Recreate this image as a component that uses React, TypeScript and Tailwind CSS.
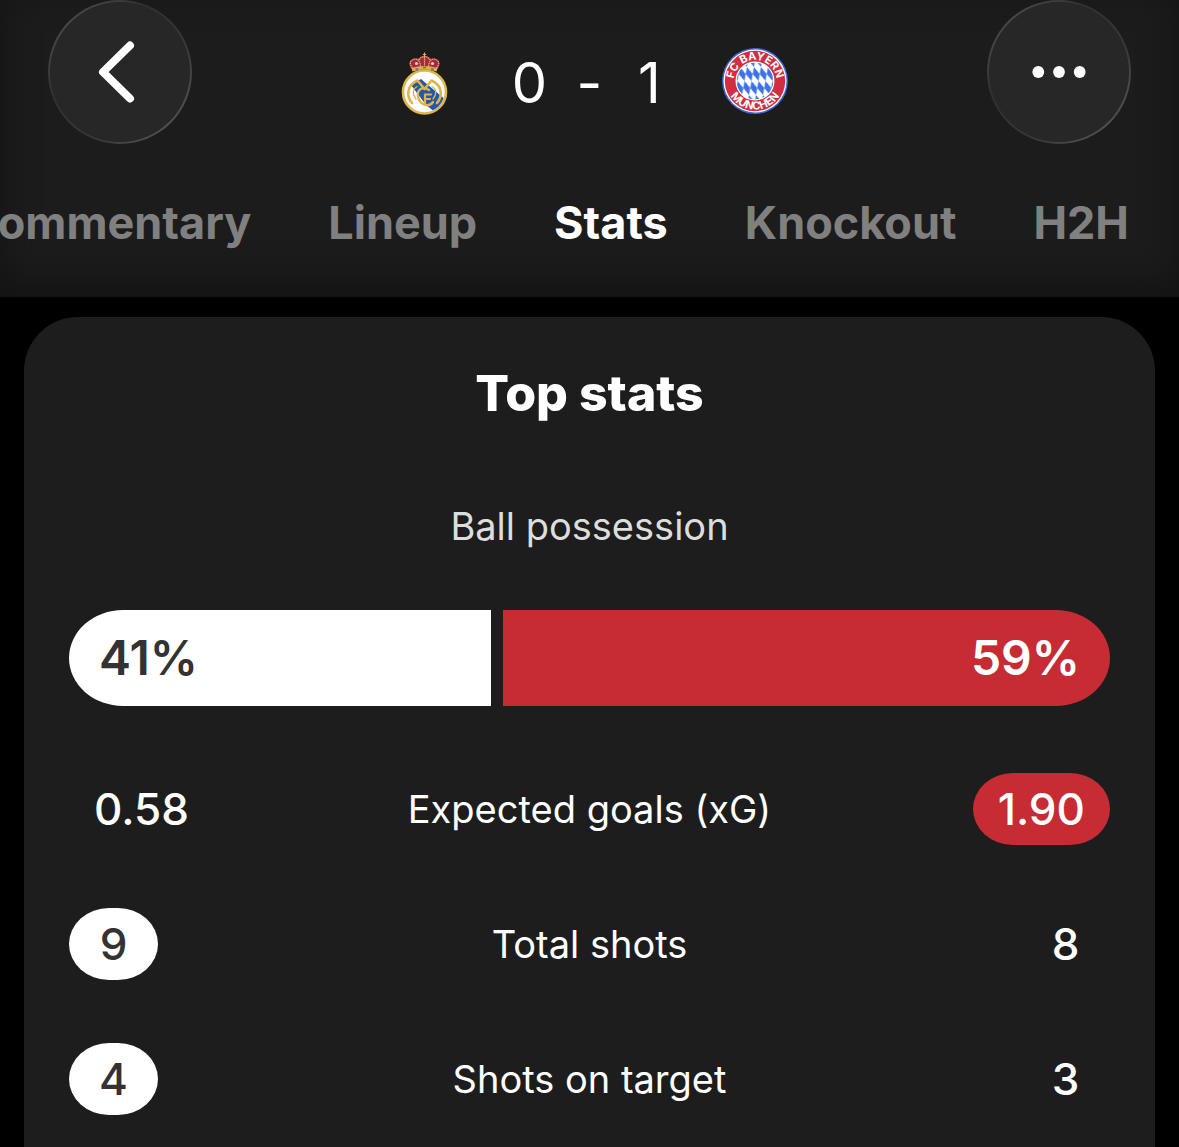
import React, { useState } from "react";
import { clsx } from "clsx";

type Side = "home" | "away";

type Stat = {
  label: string;
  home: string;
  away: string;
  leader: Side;
};

const tabs = ["Commentary", "Lineup", "Stats", "Knockout", "H2H"];

const possession = { home: 41, away: 59 };

const stats: Stat[] = [
  { label: "Expected goals (xG)", home: "0.58", away: "1.90", leader: "away" },
  { label: "Total shots", home: "9", away: "8", leader: "home" },
  { label: "Shots on target", home: "4", away: "3", leader: "home" },
];

function RealMadridCrest() {
  return (
    <svg viewBox="0 0 66 66" className="size-[66px] overflow-visible" aria-hidden="true">
      <defs>
        <clipPath id="rm-disc">
          <circle cx="32.500" cy="44" r="20" />
        </clipPath>
      </defs>
      {/* crown */}
      <path d="M20 22C14 15 19 9 26 10.500Q32.500 5 39 10.500C46 9 51 15 45 22Q32.500 18 20 22Z" fill="#a8273c" />
      <path
        d="M20.500 20Q15 13 23 11Q28 11 28.500 19M44.500 20Q50 13 42 11Q37 11 36.500 19M32.500 9V18M27 12Q29 8.500 32.500 8.500T38 12"
        fill="none"
        stroke="#d9b679"
        strokeWidth="1.200"
        strokeDasharray="1.500 .6"
      />
      <path d="M32.500 4.500V9M30.800 6.500H34.200" stroke="#e3b34c" strokeWidth="1.200" />
      <circle cx="24.500" cy="15.500" r="1.600" fill="#eec5bd" />
      <circle cx="40.500" cy="15.500" r="1.600" fill="#eec5bd" />
      <path d="M19.500 20Q32.500 16 45.500 20L44.500 23.500Q32.500 19.500 20.500 23.500Z" fill="#dcb04a" />
      <path d="M23.500 21H26.500M31 19.500H34M39 21H42" stroke="#4b6fb5" strokeWidth="1.300" />
      {/* disc with the diagonal band */}
      <circle cx="32.500" cy="44" r="21.500" fill="#fff" stroke="#e0b54b" strokeWidth="2.600" />
      <g clipPath="url(#rm-disc)">
        <path d="M19 37L29 31L54 52L44 65L34 57Z" fill="#2359a8" />
      </g>
      <g fill="none" stroke="#dfb549" strokeLinecap="round" strokeLinejoin="round">
        <path d="M20 55C13.500 47 15.500 37 25.500 32.500L32.500 41L39.500 32.500C49.500 37 51.500 47 45 55" strokeWidth="2.600" />
        <path d="M24 51C20 46 20.500 41 25 38.500M41 51C45 46 44.500 41 40 38.500" strokeWidth="1.300" />
        <path d="M37 42C30.500 37.500 25 42 26 48C27 57 37 60 41 54" strokeWidth="2.300" />
        <path d="M33 56.500V46.500H39M33 51H38" strokeWidth="2.200" />
      </g>
    </svg>
  );
}

function BayernCrest() {
  return (
    <svg viewBox="0 0 66 66" className="size-[66px]" aria-hidden="true">
      <defs>
        <pattern id="bay-check" width="7" height="14" patternUnits="userSpaceOnUse" patternTransform="translate(33 33) skewX(18)">
          <rect width="7" height="14" fill="#fff" />
          <path d="M3.500 0L7 7L3.500 14L0 7Z" fill="#3c72e8" />
        </pattern>
        <path id="bay-top" d="M12 38A21.500 21.500 0 1 1 54 38" />
        <path id="bay-bottom" d="M4.500 33A28.500 28.500 0 0 0 61.500 33" />
      </defs>
      <circle cx="33" cy="33" r="33" fill="#3c67dc" />
      <circle cx="33" cy="33" r="31.500" fill="#fff" />
      <circle cx="33" cy="33" r="30.200" fill="#d22d40" />
      <circle cx="33" cy="33" r="19.500" fill="#fff" />
      <circle cx="33" cy="33" r="18.300" fill="url(#bay-check)" />
      <g className="fill-white font-['Inter',sans-serif] text-[11px] font-bold" textAnchor="middle">
        <text>
          <textPath href="#bay-top" startOffset="50%">FC BAYERN</textPath>
        </text>
        <text>
          <textPath href="#bay-bottom" startOffset="50%">MÜNCHEN</textPath>
        </text>
      </g>
    </svg>
  );
}

function RoundButton({ label, children }: { label: string; children: React.ReactNode }) {
  return (
    <button
      type="button"
      aria-label={label}
      className="size-36 shrink-0 rounded-full bg-[linear-gradient(135deg,#585858,#303030_35%,#383838_65%,#606060)] p-[2px]"
    >
      <span className="flex size-full items-center justify-center rounded-full bg-[#272727]">{children}</span>
    </button>
  );
}

function Value({ value, side, leader }: { value: string; side: Side; leader: Side }) {
  const leading = side === leader;
  return (
    <span
      className={clsx(
        "inline-flex h-[72px] min-w-[89px] items-center justify-center rounded-[40px/36px] px-[25px] text-[44px] font-medium",
        leading && side === "home" && "bg-white text-[#333333]",
        leading && side === "away" && "bg-[#c72c34] text-white",
        !leading && "text-white"
      )}
    >
      {value}
    </span>
  );
}

export default function App() {
  const [activeTab, setActiveTab] = useState("Stats");

  return (
    <div className="flex min-h-screen flex-col bg-black font-['Inter',sans-serif] text-white">
      <header className="bg-[#1c1c1c] pb-10 shadow-[inset_0_-14px_36px_#131313]">
        <div className="flex items-start justify-between px-12">
          <RoundButton label="Back">
            <svg viewBox="0 0 72 72" className="size-[72px]" fill="none" stroke="#fff" strokeWidth="8" strokeLinecap="round" strokeLinejoin="round">
              <path d="M46 9.500L19 36L46 62.500" />
            </svg>
          </RoundButton>

          <div className="flex h-[162px] items-center gap-[54px]">
            <RealMadridCrest />
            <div className="flex gap-6 pt-1 text-center text-[56px]">
              <span className="w-9">0</span>
              <span className="w-9">-</span>
              <span className="w-9">1</span>
            </div>
            <BayernCrest />
          </div>

          <RoundButton label="More">
            <svg viewBox="0 0 72 72" className="size-[72px]" fill="#fff">
              <circle cx="15.300" cy="36" r="5.900" />
              <circle cx="36" cy="36" r="5.900" />
              <circle cx="56.700" cy="36" r="5.900" />
            </svg>
          </RoundButton>
        </div>

        <nav className="flex h-[95px] items-start justify-end gap-[77px] overflow-hidden px-[50px] pt-8 text-[45px] leading-[58px] font-bold">
          {tabs.map((tab) => (
            <button
              key={tab}
              type="button"
              onClick={() => setActiveTab(tab)}
              className={clsx("shrink-0", tab === activeTab ? "text-white" : "text-[#808080]")}
            >
              {tab}
            </button>
          ))}
        </nav>
      </header>

      <main className="flex grow flex-col px-6 pt-5">
        <section className="grow rounded-t-[54px] bg-[#1d1d1d] px-[45px] pt-[46px]">
          <h1 className="text-center text-[50px] leading-[60px] font-extrabold">Top stats</h1>

          <h2 className="mt-[79px] text-center text-[38px] leading-[48px] text-[#dddddd]">Ball possession</h2>
          <div className="mt-[60px] flex h-24 gap-3 overflow-hidden rounded-[54px/48px] text-[48px] font-semibold">
            <div
              className="flex items-center bg-white text-[#333333]"
              style={{ flexGrow: possession.home, flexBasis: 0 }}
            >
              <span className="pl-[30px]">{possession.home}%</span>
            </div>
            <div
              className="flex items-center justify-end bg-[#c72c34]"
              style={{ flexGrow: possession.away, flexBasis: 0 }}
            >
              <span className="pr-[30px]">{possession.away}%</span>
            </div>
          </div>

          <table className="mt-[35px] w-full table-fixed">
            <tbody>
              {stats.map((stat) => (
                <tr key={stat.label} className="h-[135px]">
                  <td className="w-1/4 p-0 text-left">
                    <Value value={stat.home} side="home" leader={stat.leader} />
                  </td>
                  <th scope="row" className="px-0 pt-[2px] pb-0 text-center text-[38px] font-normal">
                    {stat.label}
                  </th>
                  <td className="w-1/4 p-0 text-right">
                    <Value value={stat.away} side="away" leader={stat.leader} />
                  </td>
                </tr>
              ))}
            </tbody>
          </table>
        </section>
      </main>
    </div>
  );
}
